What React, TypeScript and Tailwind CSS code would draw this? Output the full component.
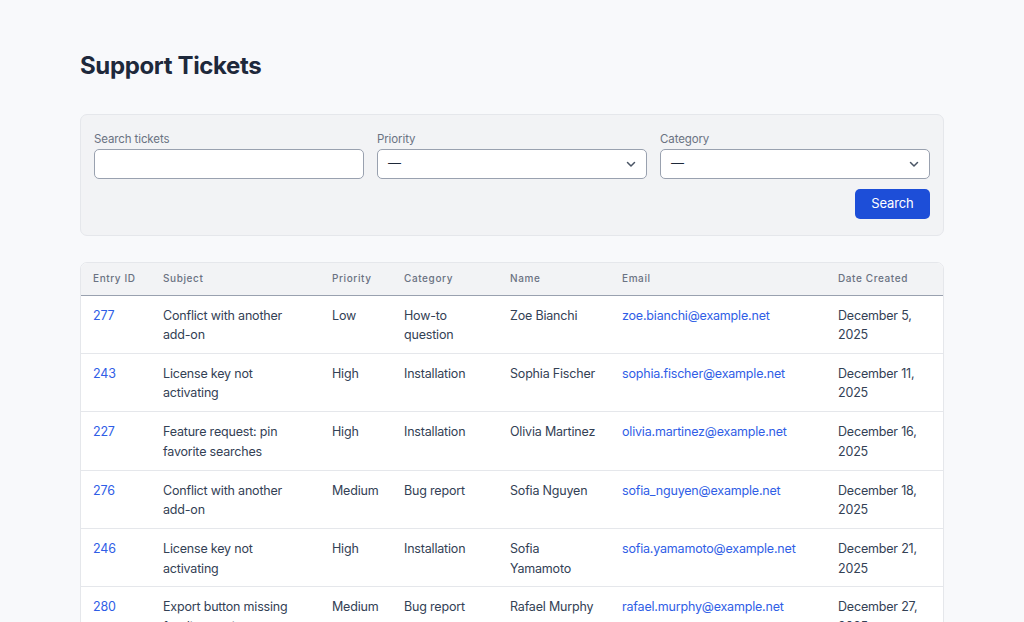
import React from "react";

const rows = [
  ["277", "Conflict with another add-on", "Low", "How-to question", "Zoe Bianchi", "zoe.bianchi@example.net", "December 5, 2025"],
  ["243", "License key not activating", "High", "Installation", "Sophia Fischer", "sophia.fischer@example.net", "December 11, 2025"],
  ["227", "Feature request: pin favorite searches", "High", "Installation", "Olivia Martinez", "olivia.martinez@example.net", "December 16, 2025"],
  ["276", "Conflict with another add-on", "Medium", "Bug report", "Sofia Nguyen", "sofia_nguyen@example.net", "December 18, 2025"],
  ["246", "License key not activating", "High", "Installation", "Sofia Yamamoto", "sofia.yamamoto@example.net", "December 21, 2025"],
  ["280", "Export button missing for diagnostics", "Medium", "Bug report", "Rafael Murphy", "rafael.murphy@example.net", "December 27, 2025"],
];

function Chevron() {
  return (
    <svg width="12" height="12" viewBox="0 0 12 12" fill="none" className="text-gray-600">
      <path d="M2.5 4.5L6 8l3.5-3.5" stroke="currentColor" strokeWidth="1.5" strokeLinecap="round" strokeLinejoin="round" />
    </svg>
  );
}

function SelectBox({ label }: { label: string }) {
  return (
    <div className="flex flex-col">
      <label className="text-[11.5px] leading-[18px] tracking-[-0.01em] text-gray-500 mb-[1px]">{label}</label>
      <div className="h-[30px] bg-white border border-gray-400 rounded-[5px] flex items-center justify-between pl-[10px] pr-[9px] text-[13px] text-gray-800">
        <span>—</span>
        <Chevron />
      </div>
    </div>
  );
}

export default function App() {
  return (
    <div className="min-h-screen bg-[#f8f9fb]" style={{ fontFamily: "Inter, 'Noto Sans', sans-serif" }}>
      <div className="max-w-[864px] mx-auto pt-[50px]">
        <h1 className="text-[24px] leading-[32px] font-bold text-[#1e293b] tracking-[-0.015em]">Support Tickets</h1>
        <div className="mt-[32px] bg-[#f2f3f5] border border-gray-200 rounded-[7px] px-[13px] pt-[15px] pb-[16px]">
          <div className="grid grid-cols-3 gap-x-[13px]">
            <div className="flex flex-col">
              <label className="text-[11.5px] leading-[18px] tracking-[-0.01em] text-gray-500 mb-[1px]">Search tickets</label>
              <div className="h-[30px] bg-white border border-gray-400 rounded-[5px]" />
            </div>
            <SelectBox label="Priority" />
            <SelectBox label="Category" />
          </div>
          <div className="flex justify-end mt-[10px]">
            <button className="h-[30px] w-[75px] bg-[#1d4ed8] text-white text-[13px] tracking-[-0.01em] rounded-[5px]">Search</button>
          </div>
        </div>

        <div className="mt-[26px] bg-white border border-gray-200 rounded-[7px] overflow-hidden">
          <table className="w-full table-fixed border-collapse text-left">
            <colgroup>
              <col className="w-[70px]" />
              <col className="w-[169px]" />
              <col className="w-[72px]" />
              <col className="w-[106px]" />
              <col className="w-[112px]" />
              <col className="w-[216px]" />
              <col />
            </colgroup>
            <thead>
              <tr className="bg-[#f2f3f5] border-b border-gray-400">
                {["Entry ID", "Subject", "Priority", "Category", "Name", "Email", "Date Created"].map((h) => (
                  <th key={h} className="h-[32px] pl-[12px] text-[10px] font-medium tracking-[0.06em] text-gray-500">{h}</th>
                ))}
              </tr>
            </thead>
            <tbody>
              {rows.map((r) => (
                <tr key={r[0]} className="border-b border-gray-200 align-top text-[12.5px] tracking-[-0.015em] leading-[19.5px] text-[#334155]">
                  <td className="pl-[12px] pt-[10px] pb-[8.4px] text-[#2f5ee6]">{r[0]}</td>
                  <td className="pl-[12px] pt-[10px] pb-[8.4px] pr-[24px]">{r[1]}</td>
                  <td className="pl-[12px] pt-[10px] pb-[8.4px]">{r[2]}</td>
                  <td className="pl-[12px] pt-[10px] pb-[8.4px] pr-[10px]">{r[3]}</td>
                  <td className="pl-[12px] pt-[10px] pb-[8.4px] pr-[10px]">{r[4]}</td>
                  <td className="pl-[12px] pt-[10px] pb-[8.4px] text-[#2f5ee6]">{r[5]}</td>
                  <td className="pl-[12px] pt-[10px] pb-[8.4px] pr-[10px]">{r[6]}</td>
                </tr>
              ))}
            </tbody>
          </table>
        </div>
      </div>
    </div>
  );
}
